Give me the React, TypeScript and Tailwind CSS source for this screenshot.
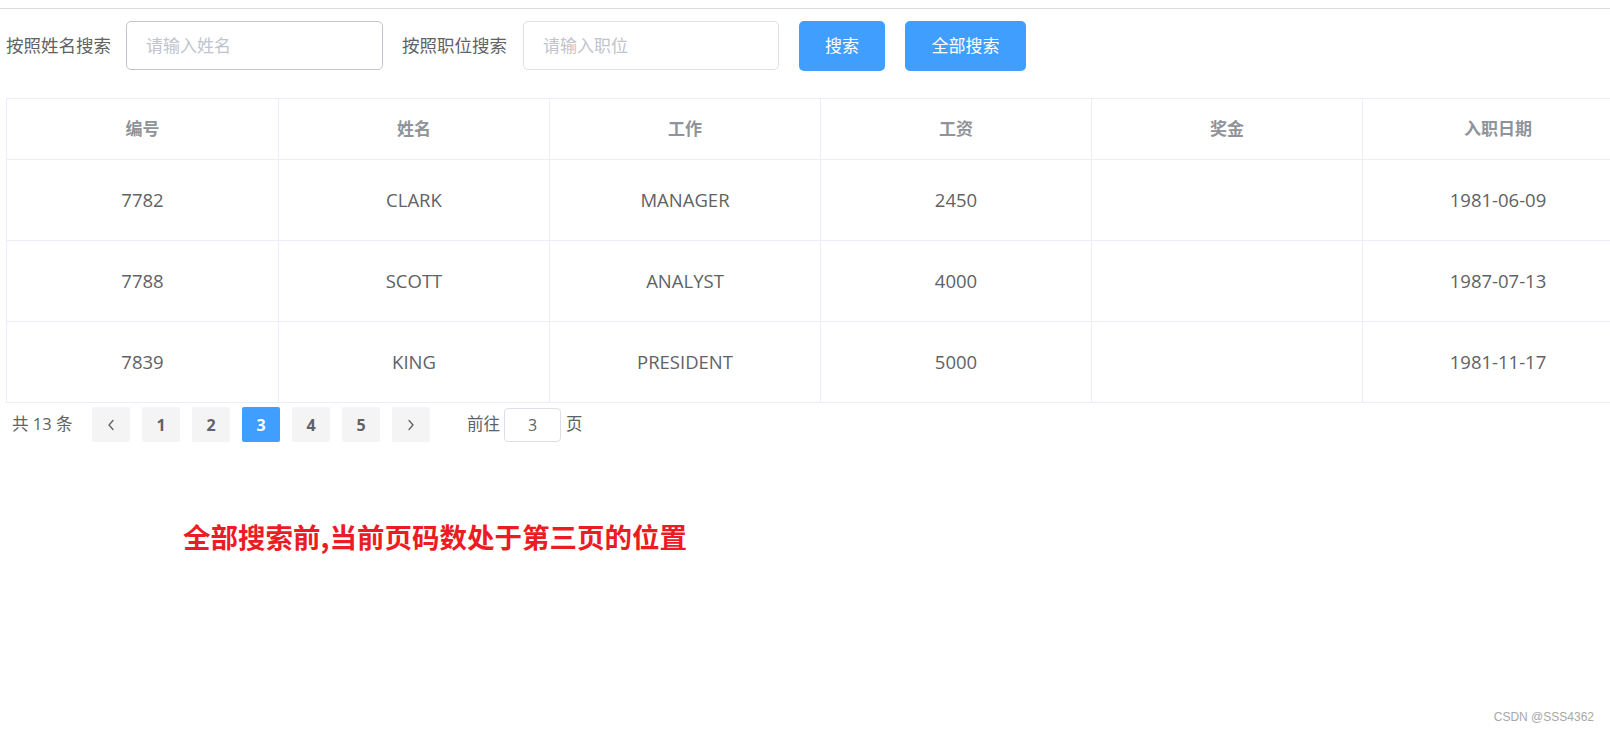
import React from "react";

type Emp = { id: string; name: string; job: string; sal: string; comm: string; date: string };

const rows: Emp[] = [
  { id: "7782", name: "CLARK", job: "MANAGER", sal: "2450", comm: "", date: "1981-06-09" },
  { id: "7788", name: "SCOTT", job: "ANALYST", sal: "4000", comm: "", date: "1987-07-13" },
  { id: "7839", name: "KING", job: "PRESIDENT", sal: "5000", comm: "", date: "1981-11-17" },
];

const heads = ["编号", "姓名", "工作", "工资", "奖金", "入职日期"];

const Chevron = ({ dir }: { dir: "left" | "right" }) => (
  <svg width="14" height="14" viewBox="0 0 14 14" fill="none">
    <path
      d={dir === "left" ? "M9 2.5 L5 7 L9 11.5" : "M5 2.5 L9 7 L5 11.5"}
      stroke="#606266"
      strokeWidth="1.3"
      strokeLinecap="round"
      strokeLinejoin="round"
    />
  </svg>
);

const App = () => {
  const pages = [1, 2, 3, 4, 5];

  return (
    <div className="relative w-[1610px] h-[735px] overflow-hidden bg-white font-['Open_Sans','Noto_Sans_CJK_SC',sans-serif]">
      <div className="h-[8px]" />
      <div className="h-px bg-[#dcdcdc]" />

      {/* search form */}
      <div className="flex items-center pt-[12px] h-[61px] text-[17.5px] text-[#606266]">
        <label className="w-[126px] pl-[6px] shrink-0">按照姓名搜索</label>
        <input
          className="w-[257px] h-[49px] border border-[#c0c4cc] rounded-[5px] px-[19px] text-[17px] outline-none placeholder:text-[#c0c4cc]"
          placeholder="请输入姓名"
        />
        <label className="w-[140px] pl-[19px] shrink-0">按照职位搜索</label>
        <input
          className="w-[256px] h-[49px] border border-[#dcdfe6] rounded-[5px] px-[19px] text-[17px] outline-none placeholder:text-[#c0c4cc]"
          placeholder="请输入职位"
        />
        <button className="ml-[20px] w-[86px] h-[50px] rounded-[5px] bg-[#409eff] text-white text-[17px]">搜索</button>
        <button className="ml-[20px] w-[121px] h-[50px] rounded-[5px] bg-[#409eff] text-white text-[17px]">全部搜索</button>
      </div>

      {/* table */}
      <div className="mt-[28px] ml-[6px] overflow-hidden">
        <div className="w-[1632px] border-t border-l border-[#ebeef5]">
          <div className="grid grid-cols-[272px_271px_271px_271px_271px_271px] h-[61px] border-b border-[#ebeef5]">
            {heads.map((h, i) => (
              <div key={i} className="flex items-center justify-center border-r border-[#ebeef5] text-[17px] font-bold text-[#909399]">
                {h}
              </div>
            ))}
          </div>
          {rows.map((r) => (
            <div key={r.id} className="grid grid-cols-[272px_271px_271px_271px_271px_271px] h-[81px] border-b border-[#ebeef5] text-[18.5px] text-[#606266]">
              {[r.id, r.name, r.job, r.sal, r.comm, r.date].map((c, i) => (
                <div key={i} className="flex items-center justify-center border-r border-[#ebeef5]">
                  {c}
                </div>
              ))}
            </div>
          ))}
        </div>
      </div>

      {/* pagination */}
      <div className="flex items-center mt-[4px] h-[35px] pl-[12px] text-[16.5px] text-[#606266]">
        <span className="w-[80px] shrink-0">共 13 条</span>
        <button className="w-[38px] h-[35px] rounded-[2px] bg-[#f4f4f5] flex items-center justify-center">
          <Chevron dir="left" />
        </button>
        {pages.map((p) => (
          <button
            key={p}
            className={
              p === 3
                ? "ml-[12px] w-[38px] h-[35px] rounded-[2px] bg-[#409eff] text-white font-bold text-[16px]"
                : "ml-[12px] w-[38px] h-[35px] rounded-[2px] bg-[#f4f4f5] text-[#606266] font-bold text-[16px]"
            }
          >
            {p}
          </button>
        ))}
        <button className="ml-[12px] w-[38px] h-[35px] rounded-[2px] bg-[#f4f4f5] flex items-center justify-center">
          <Chevron dir="right" />
        </button>
        <span className="ml-[37px]">前往</span>
        <input
          className="ml-[4px] w-[57px] h-[34px] border border-[#dcdfe6] rounded-[4px] text-center text-[16px] outline-none"
          defaultValue="3"
        />
        <span className="ml-[5px]">页</span>
      </div>

      {/* note */}
      <div className="mt-[74px] ml-[183px] h-[40px] leading-[40px] text-[27.5px] font-bold text-[#ec1c24] font-['Noto_Sans_CJK_SC',sans-serif]">
        全部搜索前,当前页码数处于第三页的位置
      </div>

      {/* watermark */}
      <div className="absolute right-[16px] bottom-[9px] text-[12px] text-[#a8a8a8] font-['Liberation_Sans',sans-serif]">
        CSDN @SSS4362
      </div>
    </div>
  );
};

export default App;
